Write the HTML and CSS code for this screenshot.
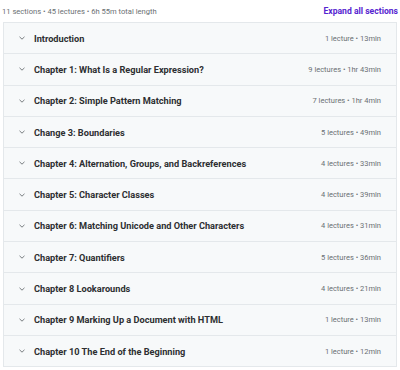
FILE: index.html
```html
<!DOCTYPE html>
<html lang="en">
<head>
    <meta charset="UTF-8">
    <meta name="viewport" content="width=device-width, initial-scale=1.0">
    <title>Course content</title>
    <link rel="stylesheet" href="styles.css">
</head>
<body>
    <div class="curriculum">
        <div class="curriculum-header">
            <span class="curriculum-stats">11 sections • 45 lectures • 6h 55m total length</span>
            <span class="expand-all">Expand all sections</span>
        </div>

        <div class="sections">
            <div class="section">
                <svg class="chevron" viewBox="0 0 10 10"><path d="M2.5 3.8 L5 6.2 L7.5 3.8"/></svg>
                <span class="section-title">Introduction</span>
                <span class="section-meta">1 lecture • 13min</span>
            </div>
            <div class="section">
                <svg class="chevron" viewBox="0 0 10 10"><path d="M2.5 3.8 L5 6.2 L7.5 3.8"/></svg>
                <span class="section-title">Chapter 1: What Is a Regular Expression?</span>
                <span class="section-meta">9 lectures • 1hr 43min</span>
            </div>
            <div class="section">
                <svg class="chevron" viewBox="0 0 10 10"><path d="M2.5 3.8 L5 6.2 L7.5 3.8"/></svg>
                <span class="section-title">Chapter 2: Simple Pattern Matching</span>
                <span class="section-meta">7 lectures • 1hr 4min</span>
            </div>
            <div class="section">
                <svg class="chevron" viewBox="0 0 10 10"><path d="M2.5 3.8 L5 6.2 L7.5 3.8"/></svg>
                <span class="section-title">Change 3: Boundaries</span>
                <span class="section-meta">5 lectures • 49min</span>
            </div>
            <div class="section">
                <svg class="chevron" viewBox="0 0 10 10"><path d="M2.5 3.8 L5 6.2 L7.5 3.8"/></svg>
                <span class="section-title">Chapter 4: Alternation, Groups, and Backreferences</span>
                <span class="section-meta">4 lectures • 33min</span>
            </div>
            <div class="section">
                <svg class="chevron" viewBox="0 0 10 10"><path d="M2.5 3.8 L5 6.2 L7.5 3.8"/></svg>
                <span class="section-title">Chapter 5: Character Classes</span>
                <span class="section-meta">4 lectures • 39min</span>
            </div>
            <div class="section">
                <svg class="chevron" viewBox="0 0 10 10"><path d="M2.5 3.8 L5 6.2 L7.5 3.8"/></svg>
                <span class="section-title">Chapter 6: Matching Unicode and Other Characters</span>
                <span class="section-meta">4 lectures • 31min</span>
            </div>
            <div class="section">
                <svg class="chevron" viewBox="0 0 10 10"><path d="M2.5 3.8 L5 6.2 L7.5 3.8"/></svg>
                <span class="section-title">Chapter 7: Quantifiers</span>
                <span class="section-meta">5 lectures • 36min</span>
            </div>
            <div class="section">
                <svg class="chevron" viewBox="0 0 10 10"><path d="M2.5 3.8 L5 6.2 L7.5 3.8"/></svg>
                <span class="section-title">Chapter 8 Lookarounds</span>
                <span class="section-meta">4 lectures • 21min</span>
            </div>
            <div class="section">
                <svg class="chevron" viewBox="0 0 10 10"><path d="M2.5 3.8 L5 6.2 L7.5 3.8"/></svg>
                <span class="section-title">Chapter 9 Marking Up a Document with HTML</span>
                <span class="section-meta">1 lecture • 13min</span>
            </div>
            <div class="section">
                <svg class="chevron" viewBox="0 0 10 10"><path d="M2.5 3.8 L5 6.2 L7.5 3.8"/></svg>
                <span class="section-title">Chapter 10 The End of the Beginning</span>
                <span class="section-meta">1 lecture • 12min</span>
            </div>
        </div>
    </div>
</body>
</html>
```

FILE: styles.css
```css
body {
    margin: 0;
    font-family: 'Roboto', 'Inter', sans-serif;
    color: #2d2f31;
    background-color: #ffffff;
}
.curriculum {
    width: 400px;
}
.curriculum-header {
    display: flex;
    justify-content: space-between;
    align-items: center;
    height: 22px;
    padding: 0 2px;
}
.curriculum-stats {
    font-size: 7.6px;
    color: #6a6f73;
}
.expand-all {
    font-size: 8.6px;
    font-weight: 700;
    color: #5624d0;
}
.sections {
    margin: 0 3px;
    border: 1px solid #e4e8eb;
}
.section {
    display: flex;
    align-items: center;
    height: 30.3px;
    padding: 0 15px 0 13px;
    background-color: #f7f9fa;
    border-top: 1px solid #e4e8eb;
}
.section:first-child {
    border-top: none;
}
.chevron {
    width: 10px;
    height: 10px;
    margin-right: 7px;
    fill: none;
    stroke: #6a6f73;
    stroke-width: 0.9;
}
.section-title {
    flex: 1;
    font-size: 9.2px;
    font-weight: 700;
}
.section-meta {
    font-size: 7.5px;
    color: #6a6f73;
}
```
